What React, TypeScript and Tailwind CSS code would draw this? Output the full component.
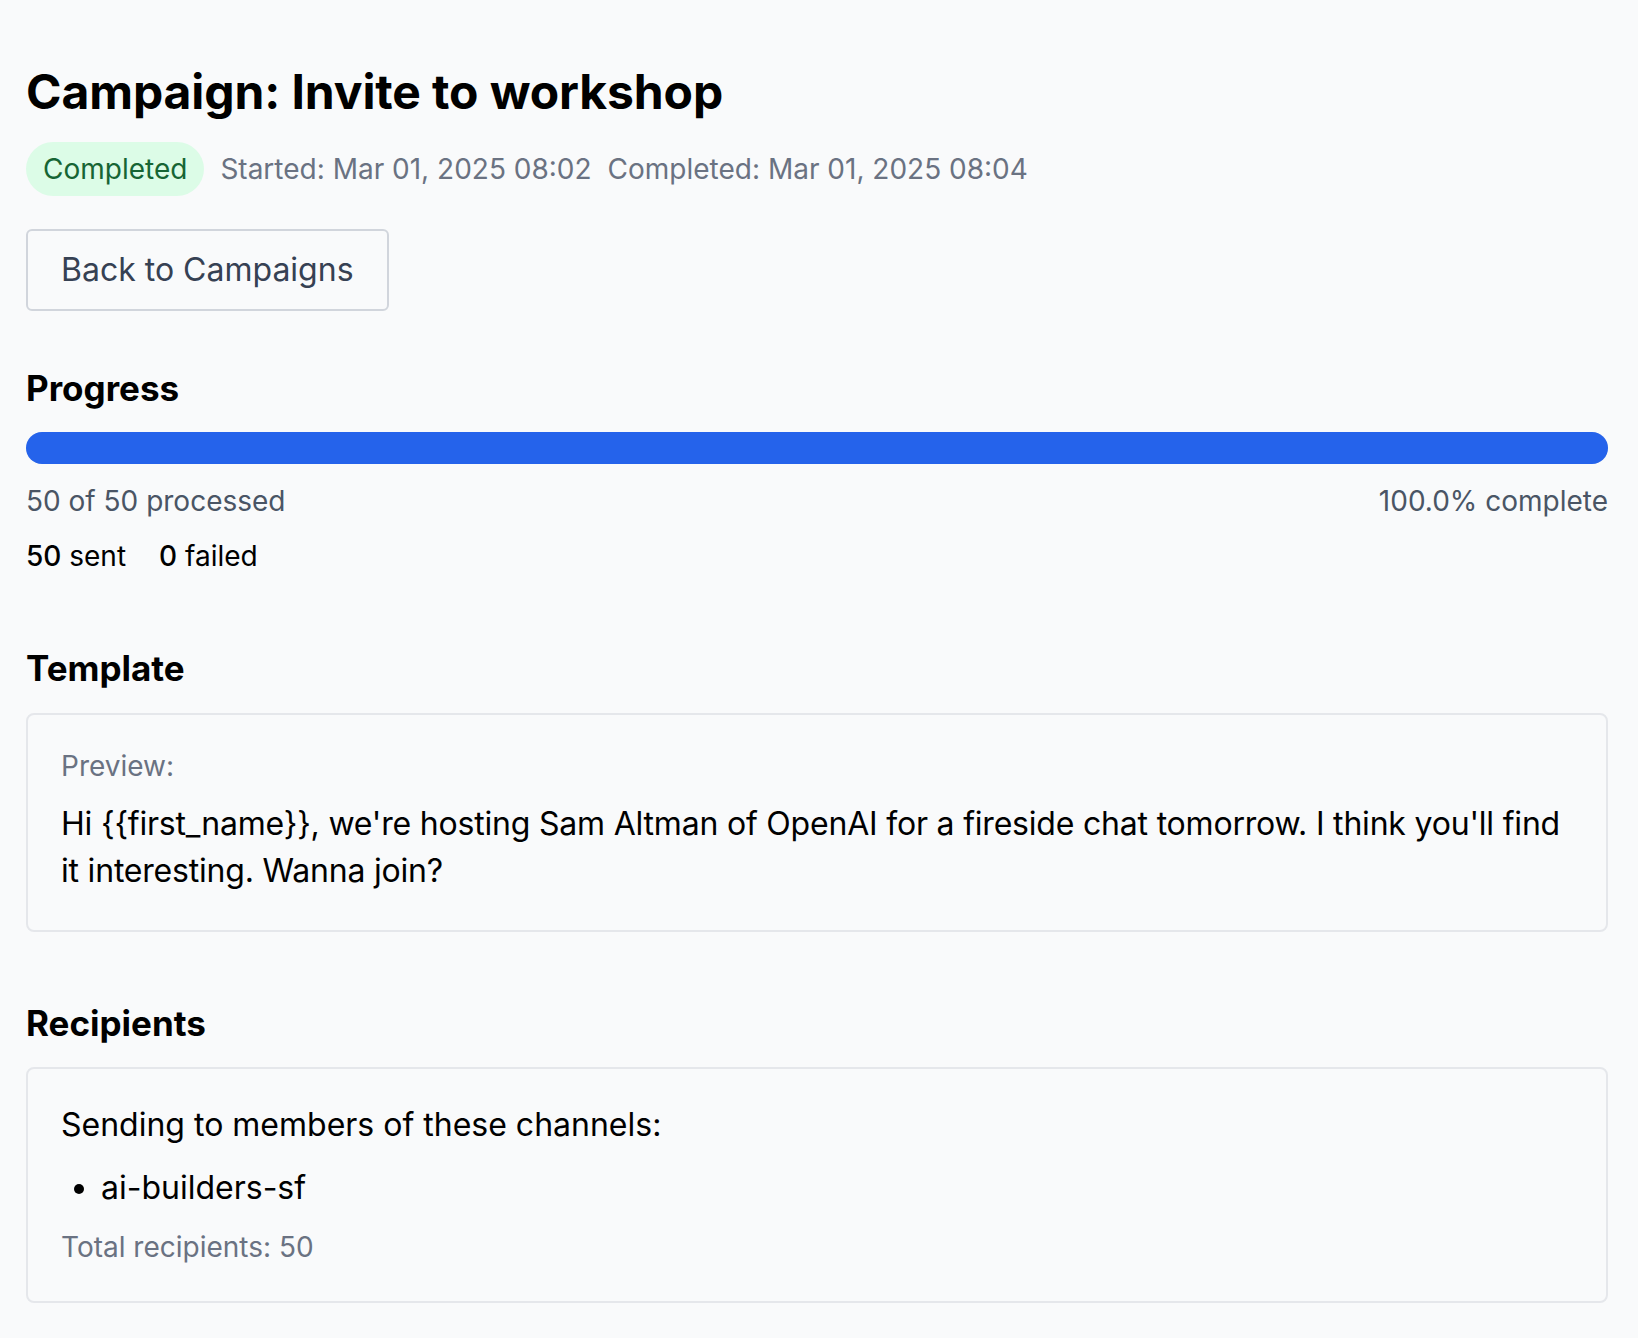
export default function App() {
  return (
    <div className="min-h-screen bg-[#f9fafb] pl-[26px] pr-[30px] pt-[62px] pb-10 text-black" style={{ fontFamily: 'Inter, "Noto Sans", sans-serif' }}>
      <h1 className="text-[48px] font-bold leading-[60px] tracking-[-0.1px]">Campaign: Invite to workshop</h1>

      <div className="mt-[20px] flex items-center gap-[16px] text-[28px] text-gray-500">
        <span className="rounded-full bg-[#dcfce7] px-[17px] py-[9px] leading-[36px] text-[#166534]">Completed</span>
        <span>Started: Mar 01, 2025 08:02</span>
        <span>Completed: Mar 01, 2025 08:04</span>
      </div>

      <button className="mt-[33px] flex h-[82px] items-center rounded-[6px] border-2 border-gray-300 px-[33px] text-[32px] text-gray-700">
        Back to Campaigns
      </button>

      <section className="mt-[57px]">
        <h2 className="text-[35px] font-bold leading-[40px]">Progress</h2>
        <div className="mt-[24px] h-[32px] w-full rounded-full bg-gray-200">
          <div className="h-full rounded-full bg-[#2563eb]" style={{ width: '100%' }} />
        </div>
        <div className="mt-[19px] flex justify-between text-[28px] leading-[36px] text-gray-600">
          <span>50 of 50 processed</span>
          <span>100.0% complete</span>
        </div>
        <div className="mt-[19px] flex gap-[33px] text-[28px] leading-[36px]">
          <span><span className="font-medium">50</span> sent</span>
          <span><span className="font-medium">0</span> failed</span>
        </div>
      </section>

      <section className="mt-[74px]">
        <h2 className="text-[35px] font-bold leading-[40px]">Template</h2>
        <div className="mt-[25px] rounded-[8px] border-2 border-gray-200 px-[33px] pt-[34px] pb-[36px]">
          <div className="text-[28px] leading-[34px] text-gray-500">Preview:</div>
          <p className="mt-[17px] text-[32px] leading-[47px] tracking-[-0.2px]">
            Hi {'{{first_name}}'}, we're hosting Sam Altman of OpenAI for a fireside chat tomorrow. I think you'll find it interesting. Wanna join?
          </p>
        </div>
      </section>

      <section className="mt-[71px]">
        <h2 className="text-[35px] font-bold leading-[40px]">Recipients</h2>
        <div className="mt-[24px] rounded-[8px] border-2 border-gray-200 px-[33px] pt-[35px] pb-[36px]">
          <p className="text-[32px] leading-[42px]">Sending to members of these channels:</p>
          <ul className="mt-[21px] list-disc pl-[40px] text-[32px] leading-[42px]">
            <li>ai-builders-sf</li>
          </ul>
          <p className="mt-[20px] text-[28px] leading-[36px] text-gray-500">Total recipients: 50</p>
        </div>
      </section>
    </div>
  )
}
